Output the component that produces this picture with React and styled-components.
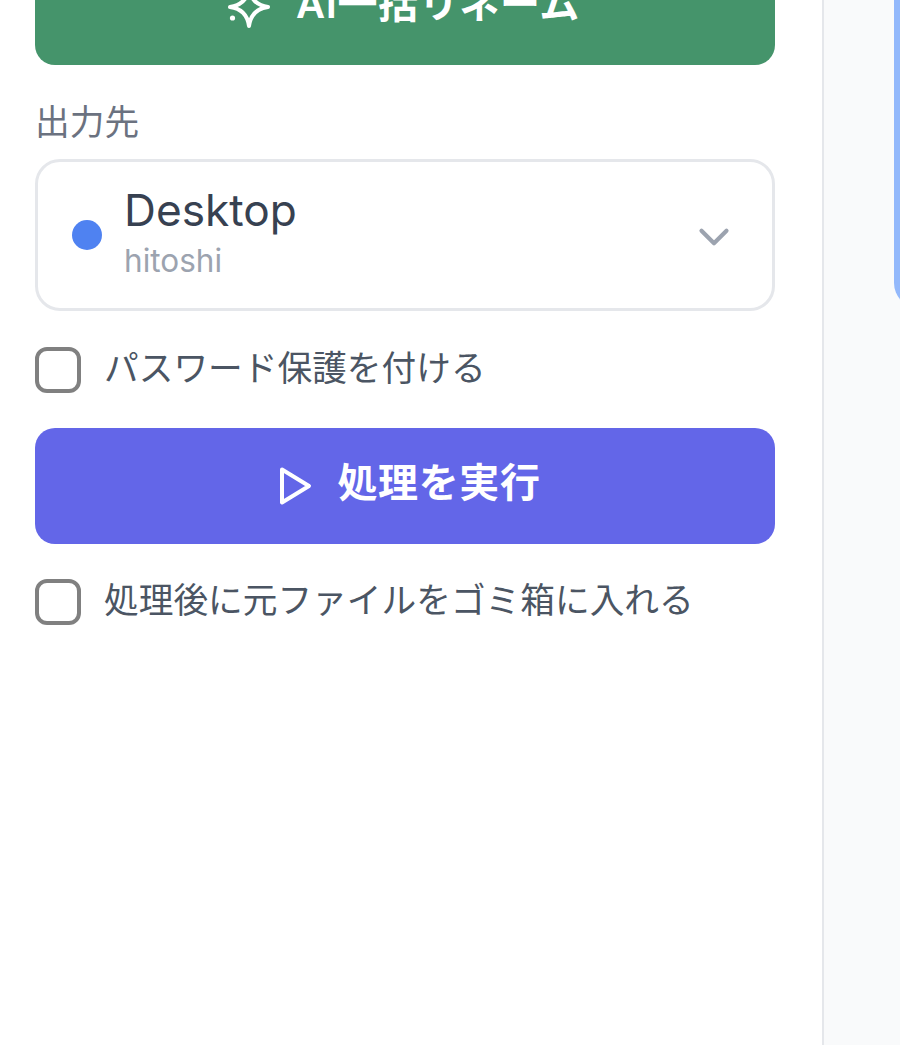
import styled, { createGlobalStyle } from "styled-components";
import { ChevronDown } from "lucide-react";

const GlobalStyle = createGlobalStyle`
  html, body {
    margin: 0;
    padding: 0;
    background: #fff;
    font-family: Inter, "Noto Sans CJK JP", sans-serif;
  }
`;

const Page = styled.div`
  display: flex;
  width: 900px;
  height: 1045px;
  overflow: hidden;
`;

const Sidebar = styled.aside`
  box-sizing: border-box;
  flex: 0 0 824px;
  padding: 0 47px 0 35px;
  background: #fff;
  border-right: 2px solid #e5e7eb;
`;

const Scrolled = styled.div`
  display: flex;
  flex-direction: column;
  margin-top: -51px;
`;

const ActionButton = styled.button`
  display: flex;
  align-items: center;
  justify-content: center;
  gap: ${(p) => p.$gap};
  width: 100%;
  height: 116px;
  padding: 0 ${(p) => p.$paddingRight} 0 0;
  border: 0;
  border-radius: 20px;
  background: ${(p) => p.$color};
  color: #fff;
  font-family: inherit;
  font-size: 40px;
  font-weight: 600;
  letter-spacing: 0.6px;
  line-height: 60px;
`;

const ButtonText = styled.span`
  margin-bottom: 6px;
`;

const Label = styled.div`
  margin: 32px 0 12px;
  color: #6b7280;
  font-size: 34.7px;
  line-height: 50px;
`;

const Select = styled.div`
  box-sizing: border-box;
  display: flex;
  align-items: center;
  gap: 22px;
  height: 152px;
  padding: 0 33px 0 34px;
  border: 3px solid #e5e7eb;
  border-radius: 25px;
  background: #fff;
`;

const Dot = styled.span`
  flex: none;
  width: 30px;
  height: 30px;
  border-radius: 50%;
  background: #4f82f1;
`;

const SelectText = styled.div`
  display: flex;
  flex: 1;
  flex-direction: column;
  gap: 6px;
  margin-top: -4px;
`;

const SelectName = styled.div`
  color: #374151;
  font-size: 44.2px;
  font-weight: 400;
  line-height: 50px;
`;

const SelectUser = styled.div`
  color: #9ca3af;
  font-size: 31.5px;
  line-height: 40px;
`;

const Chevron = styled(ChevronDown)`
  flex: none;
  margin-top: 4px;
`;

const CheckRow = styled.label`
  display: flex;
  align-items: center;
  gap: 23px;
  height: 46px;
  margin: ${(p) => p.$margin};
  color: #4b5563;
  font-size: 34.7px;
`;

const CheckText = styled.span`
  margin-bottom: 3px;
  line-height: 43px;
`;

const CheckBox = styled.span`
  box-sizing: border-box;
  flex: none;
  width: 46px;
  height: 46px;
  border: 4px solid #808080;
  border-radius: 12px;
  background: #fff;
`;

const Preview = styled.main`
  flex: 1;
  background: #f9fafb;
  padding-left: 70px;
`;

const PreviewCard = styled.div`
  width: 120px;
  height: 308px;
  border-radius: 0 0 0 25px;
  background: #93b8fb;
`;

const SparkleIcon = () => (
  <svg width="50" height="50" viewBox="0 0 50 50" fill="none" stroke="currentColor" strokeWidth="4" strokeLinejoin="round">
    <path d="M25 6C26.5 17 33 23.5 44 25C33 26.5 26.5 33 25 44C23.5 33 17 26.5 6 25C17 23.5 23.5 17 25 6Z" />
    <circle cx="8.5" cy="36" r="2.6" fill="currentColor" stroke="none" />
  </svg>
);

const PlayIcon = () => (
  <svg width="50" height="50" viewBox="0 0 50 50" fill="none" stroke="currentColor" strokeWidth="4" strokeLinejoin="round">
    <polygon points="12,8.5 39,25 12,41.5" />
  </svg>
);

export default function App() {
  return (
    <>
      <GlobalStyle />
      <Page>
        <Sidebar>
          <Scrolled>
            <ActionButton $color="#45946b" $gap="22px" $paddingRight="6px">
              <SparkleIcon />
              <ButtonText>AI一括リネーム</ButtonText>
            </ActionButton>
            <Label>出力先</Label>
            <Select>
              <Dot />
              <SelectText>
                <SelectName>Desktop</SelectName>
                <SelectUser>hitoshi</SelectUser>
              </SelectText>
              <Chevron size={50} color="#9ca3af" strokeWidth={2} />
            </Select>
            <CheckRow $margin="36px 0 35px">
              <CheckBox />
              <CheckText>パスワード保護を付ける</CheckText>
            </CheckRow>
            <ActionButton $color="#6366e8" $gap="18px" $paddingRight="0">
              <PlayIcon />
              <ButtonText>処理を実行</ButtonText>
            </ActionButton>
            <CheckRow $margin="35px 0 0">
              <CheckBox />
              <CheckText>処理後に元ファイルをゴミ箱に入れる</CheckText>
            </CheckRow>
          </Scrolled>
        </Sidebar>
        <Preview>
          <PreviewCard />
        </Preview>
      </Page>
    </>
  );
}
